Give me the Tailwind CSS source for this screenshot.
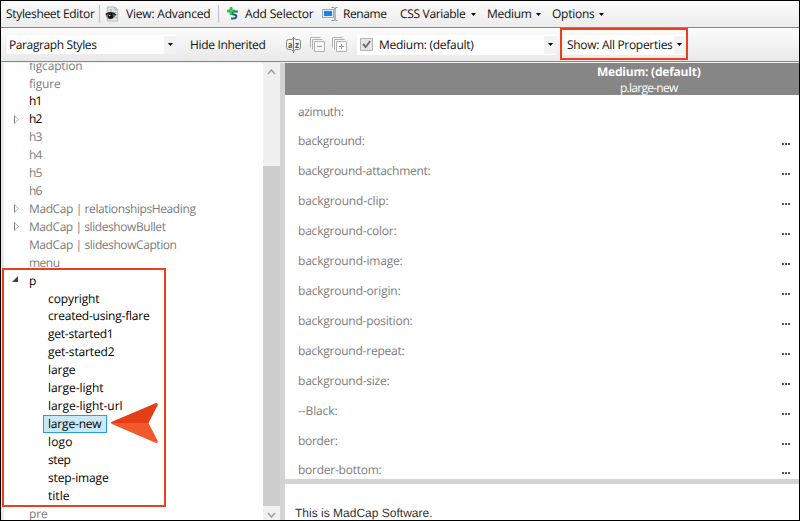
<!DOCTYPE html>
<html lang="en">
<head>
<meta charset="utf-8">
<title>Stylesheet Editor</title>
<script src="https://cdn.jsdelivr.net/npm/@tailwindcss/browser@4"></script>
</head>
<body class="h-[521px] w-[800px] overflow-hidden bg-white">
<div class="relative flex h-[521px] w-[800px] flex-col overflow-hidden border border-black bg-white font-['Open_Sans','Noto_Sans',sans-serif] text-[12px] leading-[18px] whitespace-nowrap text-[#111] [text-rendering:geometricPrecision]">

  <!-- Main toolbar -->
  <header class="flex h-[27px] shrink-0 items-center border-b border-[#868686] bg-linear-to-b from-[#fbfbfb] to-[#ececec] pl-[5px]">
    <span data-w="88">Stylesheet Editor</span>
    <i class="ml-[5px] h-[18px] w-px bg-[#c0c0c8]"></i>
    <svg class="ml-[5px] h-[18px] w-[15px] shrink-0" viewBox="0 0 16 18">
      <path d="M2.500 1.500h8l3 3v12h-11z" fill="#dfe8e8" stroke="#a9bcbc"/>
      <path d="M10.500 1.500v3h3M5 4.500h3M6.500 4.500v3M9 7.500h3M11 10h2M11 13h2" fill="none" stroke="#93abab"/>
      <path d="M0.500 9Q5.500 4.500 11.500 9.500Q11 14 5.500 14.500Q1.500 14 .5 9Z" fill="#777068"/>
      <path d="M1 9.500Q6 6 11.500 10" fill="none" stroke="#25211d" stroke-width="1.700"/>
      <circle cx="6" cy="11.300" r="2.700" fill="#100d0b"/><circle cx="5" cy="10.500" r=".8" fill="#ddd"/>
    </svg>
    <span class="ml-[6px]" data-w="84">View: Advanced</span>
    <i class="ml-[8px] h-[18px] w-px bg-[#c0c0c8]"></i>
    <svg class="ml-[8px] h-[14px] w-[12px] shrink-0" viewBox="0 0 12 14">
      <path d="M10.800 4.600H6.800Q5 4.800 5.400 6.500Q5.700 7.700 7.500 7.700Q9.800 8 9.300 9.900Q8.800 11.500 6.500 11.500H4" fill="none" stroke="#17639b" stroke-width="2"/>
      <path d="M3 0.500h2v2.500h2.500v2H5v2.500H3V5H.5V3H3z" fill="#3fce45" stroke="#21a82d" stroke-width=".7"/>
    </svg>
    <span class="ml-[6px]" data-w="68">Add Selector</span>
    <svg class="ml-[9px] h-[14px] w-[16px] shrink-0" viewBox="0 0 16 14">
      <path d="M.5 2.500h11v8H.5z" fill="#e9eff5" stroke="#9ba6b1"/>
      <path d="M2 4h8v5H2z" fill="#1683e6"/>
      <path d="M9.500.5h2q1 0 1.500 1q.5-1 1.500-1h1M13 1v12M9.500 13.500h2q1 0 1.500-1q.5 1 1.500 1h1" fill="none" stroke="#73808c"/>
    </svg>
    <span class="ml-[5px]" data-w="43">Rename</span>
    <span class="ml-[14px]" data-w="65">CSS Variable</span>
    <svg class="ml-[6px] h-[3px] w-[5px] shrink-0" viewBox="0 0 5 3"><path d="M0 0h5L2.500 3z"/></svg>
    <span class="ml-[11px]" data-w="44">Medium</span>
    <svg class="ml-[5px] h-[3px] w-[5px] shrink-0" viewBox="0 0 5 3"><path d="M0 0h5L2.500 3z"/></svg>
    <span class="ml-[11px]" data-w="42">Options</span>
    <svg class="ml-[5px] h-[3px] w-[5px] shrink-0" viewBox="0 0 5 3"><path d="M0 0h5L2.500 3z"/></svg>
  </header>

  <!-- Filter toolbar -->
  <div class="flex h-[34px] shrink-0 items-center border-b border-[#868686] bg-linear-to-b from-[#fcfcfc] to-[#e9e9e9] pl-[6px]">
    <div class="flex h-[19px] w-[169px] items-center justify-between bg-white pl-[2px]">
      <span data-w="87">Paragraph Styles</span>
      <span class="flex h-[18px] w-[12px] items-center justify-center bg-[#f3f3f3]"><svg class="h-[3px] w-[5px]" viewBox="0 0 5 3"><path d="M0 0h5L2.500 3z"/></svg></span>
    </div>
    <span class="ml-[14px]" data-w="75">Hide Inherited</span>
    <svg class="ml-[21px] h-[16px] w-[15px] shrink-0" viewBox="0 0 15 16">
      <path d="M7.500 0v16" stroke="#777"/>
      <path d="M6 2.500H2.500Q.5 2.500.5 4.500v6Q.5 12.500 2.500 12.500H5l2.500 2L10 12.500h2.500q2 0 2-2v-6q0-2-2-2H10l-2.500-2z" fill="none" stroke="#888"/>
      <text x="1.900" y="10.600" font-size="9" font-weight="bold" fill="#555" textLength="4.500" lengthAdjust="spacingAndGlyphs">a</text>
      <text x="8.900" y="10.600" font-size="9" font-weight="bold" fill="#555" textLength="4" lengthAdjust="spacingAndGlyphs">z</text>
    </svg>
    <svg class="ml-[9px] h-[16px] w-[15px] shrink-0" viewBox="0 0 15 16" fill="none" stroke="#b2b2b2">
      <path d="M.5 10.500v-10h10M2.500 12.500v-10h10"/><path d="M4.500 4.500h10v10h-10z" fill="#f8f8f8"/><path d="M7 9.500h5" stroke="#999"/>
    </svg>
    <svg class="ml-[7px] h-[16px] w-[15px] shrink-0" viewBox="0 0 15 16" fill="none" stroke="#b2b2b2">
      <path d="M.5 10.500v-10h10M2.500 12.500v-10h10"/><path d="M4.500 4.500h10v10h-10z" fill="#f8f8f8"/><path d="M7 9.500h5M9.500 7v5" stroke="#999"/>
    </svg>
    <div class="ml-[10px] flex h-[20px] w-[199px] items-center bg-white pl-[3px]">
      <svg class="h-[13px] w-[13px] shrink-0" viewBox="0 0 13 13"><path d="M.5.5h12v12H.5z" fill="#e6e6e6" stroke="#b4b4b4"/><path d="M3 6l2.700 3L10.200 3" fill="none" stroke="#6d6d6d" stroke-width="1.900"/></svg>
      <span class="ml-[6px]" data-w="94">Medium: (default)</span>
      <span class="ml-auto flex h-[18px] w-[12px] items-center justify-center bg-[#f3f3f3]"><svg class="h-[3px] w-[5px]" viewBox="0 0 5 3"><path d="M0 0h5L2.500 3z"/></svg></span>
    </div>
    <div class="ml-[8px] flex h-[20px] w-[121px] items-center justify-between bg-white pl-[3px]">
      <span data-w="105">Show: All Properties</span>
      <span class="flex h-[18px] w-[11px] items-center justify-center bg-[#f3f3f3]"><svg class="h-[3px] w-[5px]" viewBox="0 0 5 3"><path d="M0 0h5L2.500 3z"/></svg></span>
    </div>
  </div>

  <main class="flex min-h-0 flex-1 border-t border-[#f1f1f1]">
    <div class="w-[3px] shrink-0 bg-[#ece9e9]"></div>
    <!-- Selector tree -->
    <nav id="tree" class="w-[259px] shrink-0 overflow-hidden text-[#7c7c7c]"></nav>
    <div class="flex w-[17px] shrink-0 flex-col bg-[#f0f0f0]">
      <svg class="h-[17px] w-[17px] shrink-0" viewBox="0 0 17 17"><path d="M5 11l3.500-4L12 11" fill="none" stroke="#a0a0a0" stroke-width="1.500"/></svg>
      <div class="mt-[86px] h-[340px] shrink-0 bg-[#cdcdcd]"></div>
      <svg class="h-[14px] w-[17px] shrink-0" viewBox="0 0 17 14"><path d="M5 7l3.500 4L12 7" fill="none" stroke="#a0a0a0" stroke-width="1.500"/></svg>
    </div>
    <div class="w-[5px] shrink-0 bg-[#d3d3d3]"></div>

    <!-- Properties and preview -->
    <section class="flex min-w-0 flex-1 flex-col">
      <div class="flex h-[32px] shrink-0 flex-col items-start bg-[#868686] text-white">
        <b class="ml-[312px] h-[17px] leading-[18px]" data-w="103">Medium: (default)</b>
        <span class="ml-[335px] h-[15px] leading-[15px]" data-w="57">p.large-new</span>
      </div>
      <div id="properties" class="h-[384px] shrink-0 overflow-hidden pt-[1.6px] text-[#7c7c7c]"></div>
      <div class="h-[5px] shrink-0 bg-[#d3d3d3]"></div>
      <div class="flex-1 pt-[20px] pl-[10px] font-['Liberation_Sans',Arial,sans-serif] text-[12px] text-[#333]"><span data-w="137">This is MadCap Software.</span></div>
    </section>
  </main>

  <!-- Callouts -->
  <div class="absolute top-[27px] left-[559px] h-[32px] w-[128px] border-2 border-[#e8401c]"></div>
  <div class="absolute top-[267px] left-[1px] h-[239px] w-[164px] border-2 border-[#e8401c]"></div>
  <svg class="absolute top-[401px] left-[109px] h-[42px] w-[50px]" viewBox="0 0 50 42">
    <path d="M1.500 20Q0 21 2 22L46 41Q48.500 41 47.500 38.500L38.500 21z" fill="#f3592b"/>
    <path d="M1 21Q1 20.300 2.500 19.500L46 1Q48.500 1 47.500 3.500L38.500 21z" fill="#e53d18"/>
  </svg>
</div>

<script>
// [label, text width, kind]: kind "on" = styled, "closed"/"open" = expander state, "sub" = class
const selectors = [
  ['figcaption', 53, ''], ['figure', 31, ''], ['h1', 12, 'on'], ['h2', 12, 'on closed'],
  ['h3', 12, ''], ['h4', 12, ''], ['h5', 12, ''], ['h6', 12, ''],
  ['MadCap | relationshipsHeading', 166, 'closed'], ['MadCap | slideshowBullet', 136, 'closed'],
  ['MadCap | slideshowCaption', 147, ''], ['menu', 30, ''], ['p', 7, 'on open'],
  ['copyright', 51, 'sub'], ['created-using-flare', 101, 'sub'], ['get-started1', 65, 'sub'],
  ['get-started2', 66, 'sub'], ['large', 27, 'sub'], ['large-light', 55, 'sub'],
  ['large-light-url', 74, 'sub'], ['large-new', 53, 'sub selected'], ['logo', 24, 'sub'],
  ['step', 22, 'sub'], ['step-image', 60, 'sub'], ['title', 21, 'sub'], ['pre', 18, '']
];
const closedIcon = '<svg class="h-[9px] w-[6px]" viewBox="0 0 6 9"><path d="M.5.8v7.400L4.500 4.500z" fill="none" stroke="#b0b0b0"/><path d="M.5.5v8" stroke="#808080"/></svg>';
const openIcon = '<svg class="h-[6px] w-[6px] -ml-[2px] -mt-[3px]" viewBox="0 0 6 6"><path d="M6 0v6H0z" fill="#404040"/></svg>';
document.getElementById('tree').innerHTML = '<div class="-mt-[6.4px]">' + selectors.map(([name, w, kind]) => {
  const sub = kind.includes('sub');
  const icon = kind.includes('closed') ? closedIcon : kind.includes('open') ? openIcon : '';
  const tone = sub || kind.startsWith('on') ? 'text-black' : '';
  const box = kind.includes('selected')
    ? 'flex h-[18px] w-[64px] items-center border border-[#26a0da] bg-[#cbe8f6] pl-[4px] -ml-[5px]' : '';
  return `<div class="flex h-[17.93px] items-center ${tone}">
    <span class="flex w-[25px] shrink-0 items-center pl-[10px]">${icon}</span>
    <span class="${sub ? 'ml-[19px]' : ''}"><span class="block ${box}"><span data-w="${w}">${name}</span></span></span></div>`;
}).join('') + '</div>';

const properties = [
  ['azimuth:', 45], ['background:', 66], ['background-attachment:', 132], ['background-clip:', 90],
  ['background-color:', 98], ['background-image:', 104], ['background-origin:', 102],
  ['background-position:', 114], ['background-repeat:', 106], ['background-size:', 91],
  ['--Black:', 39], ['border:', 39], ['border-bottom:', 83]
];
const more = '<svg class="h-[2px] w-[8px]" viewBox="0 0 8 2"><path d="M0 0h2v2H0zM3 0h2v2H3zM6 0h2v2H6z" fill="#555"/></svg>';
document.getElementById('properties').innerHTML = properties.map(([name, w], i) =>
  `<div class="flex h-[29.91px] items-center justify-between pl-[13px] pr-[9px]"><span data-w="${w}">${name}</span><span class="flex h-[2px] mt-[6px]">${i ? more : ''}</span></div>`
).join('');

function fitLabels() {
  document.querySelectorAll('[data-w]').forEach(el => {
    el.classList.add('inline-block', 'shrink-0');
    el.style.width = 'max-content';
    const n = el.textContent.length;
    const range = document.createRange();
    range.selectNodeContents(el);
    let spacing = 0;
    for (let i = 0; i < 4; i++) {
      el.style.letterSpacing = spacing + 'px';
      spacing += (Number(el.dataset.w) + 0.5 - range.getBoundingClientRect().width) / n;
    }
    el.style.letterSpacing = spacing + 'px';
    el.style.width = el.dataset.w + 'px';
  });
}
fitLabels();
window.addEventListener('load', () => {
  fitLabels();
  requestAnimationFrame(fitLabels);
  document.fonts.ready.then(fitLabels);
});
</script>
</body>
</html>
